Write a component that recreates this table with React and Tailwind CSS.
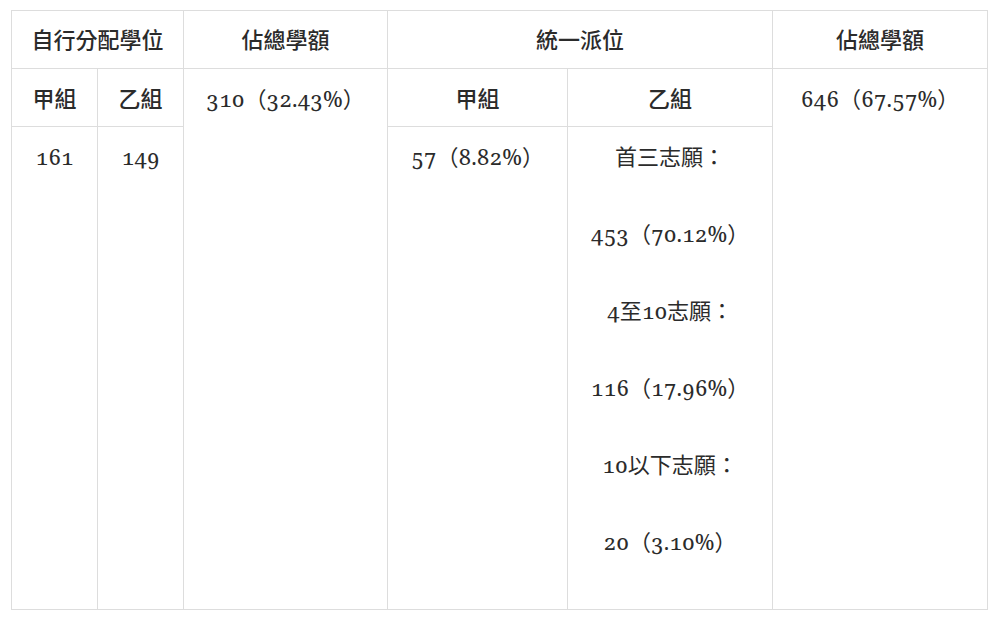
const cell = 'border border-[#dddddd] align-top text-center p-0';

function Th({ children, className = '', ...rest }) {
  return (
    <td className={`${cell} font-medium ${className}`} {...rest}>
      {children}
    </td>
  );
}

function Td({ children, className = '', ...rest }) {
  return (
    <td className={`${cell} ${className}`} {...rest}>
      {children}
    </td>
  );
}

export default function App() {
  const lines = [
    '首三志願：',
    '453（70.12%）',
    '4至10志願：',
    '116（17.96%）',
    '10以下志願：',
    '20（3.10%）',
  ];
  return (
    <div className="w-[1000px] h-[621px] bg-white pt-[10px] pl-[11px] text-[22px] leading-[38px] text-[#2b2b2b] oldstyle-nums font-['Noto_Serif','Noto_Sans_CJK_TC',serif]">
      <table className="table-fixed border-collapse w-[976px]">
        <colgroup>
          <col className="w-[86px]" />
          <col className="w-[86px]" />
          <col className="w-[204px]" />
          <col className="w-[180px]" />
          <col className="w-[205px]" />
          <col className="w-[215px]" />
        </colgroup>
        <tbody>
          <tr className="h-[58px]">
            <Th colSpan={2} className="pt-[9px]">自行分配學位</Th>
            <Th className="pt-[9px]">佔總學額</Th>
            <Th colSpan={2} className="pt-[9px]">統一派位</Th>
            <Th className="pt-[9px]">佔總學額</Th>
          </tr>
          <tr className="h-[58px]">
            <Th className="pt-[10px]">甲組</Th>
            <Th className="pt-[10px]">乙組</Th>
            <Td rowSpan={2} className="pt-[10px]">310（32.43%）</Td>
            <Th className="pt-[10px]">甲組</Th>
            <Th className="pt-[10px]">乙組</Th>
            <Td rowSpan={2} className="pt-[10px]">646（67.57%）</Td>
          </tr>
          <tr className="h-[483px]">
            <Td className="pt-[10px]">161</Td>
            <Td className="pt-[10px]">149</Td>
            <Td className="pt-[10px]">57（8.82%）</Td>
            <Td className="pt-[10px]">
              <div className="flex flex-col items-center gap-[39px]">
                {lines.map((l) => (
                  <p key={l}>{l}</p>
                ))}
              </div>
            </Td>
          </tr>
        </tbody>
      </table>
    </div>
  );
}
